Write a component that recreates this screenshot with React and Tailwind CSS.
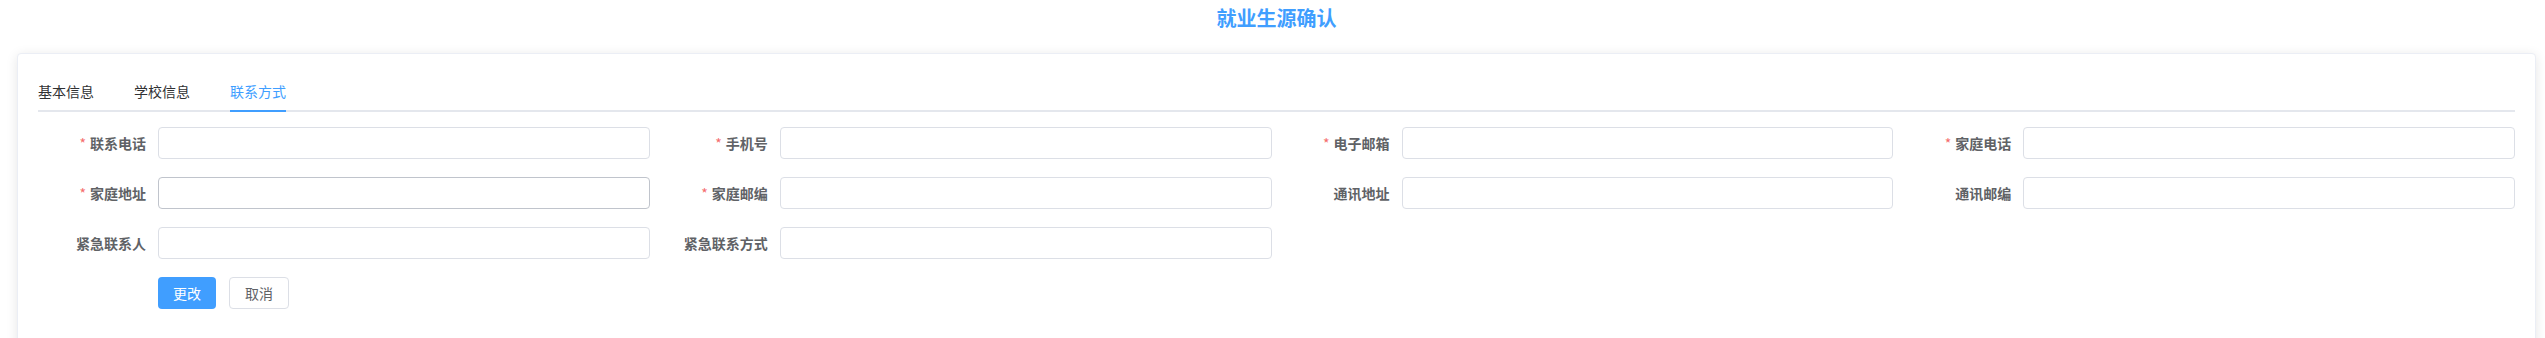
import React, { useState } from 'react';

const tabs = ['基本信息', '学校信息', '联系方式'];

const fields = [
    { label: '联系电话', required: true },
    { label: '手机号', required: true },
    { label: '电子邮箱', required: true },
    { label: '家庭电话', required: true },
    { label: '家庭地址', required: true, hover: true },
    { label: '家庭邮编', required: true },
    { label: '通讯地址' },
    { label: '通讯邮编' },
    { label: '紧急联系人' },
    { label: '紧急联系方式' },
];

const FormItem = ({ label, required, hover }) => (
    <div className="flex items-center h-8">
        <label className="w-[120px] shrink-0 pr-3 text-right text-sm font-bold text-[#606266] leading-8">
            {required && <span className="text-[#f56c6c] mr-1 font-normal">*</span>}
            {label}
        </label>
        <input
            type="text"
            className={`flex-1 min-w-0 h-8 rounded border bg-white px-[15px] text-sm text-[#606266] outline-none ${hover ? 'border-[#c0c4cc]' : 'border-[#dcdfe6]'}`}
        />
    </div>
);

const App = () => {
    const [activeTab, setActiveTab] = useState(2);

    return (
        <div className="min-h-screen bg-white font-['Noto_Sans_CJK_SC','Noto_Sans',sans-serif]">
            <div className="pl-[17px] pr-[9px]">
                <div className="h-[53px] text-center text-[20px] font-bold leading-[35px] text-[#409eff]">
                    就业生源确认
                </div>
                <div className="rounded border border-[#ebeef5] bg-white px-5 pt-[18px] pb-10 shadow-[0_2px_12px_0_rgba(0,0,0,0.1)]">
                    <div className="flex border-b-2 border-[#e4e7ed]">
                        {tabs.map((tab, index) => (
                            <div key={index} className="px-5 first:pl-0 last:pr-0 -mb-[2px] cursor-pointer" onClick={() => setActiveTab(index)}>
                                <div
                                    className={`h-10 border-b-2 text-sm leading-[38px] ${activeTab === index ? 'border-[#409eff] text-[#409eff]' : 'border-transparent text-[#303133]'}`}
                                >
                                    {tab}
                                </div>
                            </div>
                        ))}
                    </div>
                    <div className="mt-[15px] grid grid-cols-4 gap-x-[10px] gap-y-[18px]">
                        {fields.map((field, index) => (
                            <FormItem key={index} {...field} />
                        ))}
                    </div>
                    <div className="mt-[18px] flex gap-[13px] pl-[120px]">
                        <button className="h-8 rounded bg-[#409eff] px-[15px] text-sm text-white">更改</button>
                        <button className="h-8 rounded border border-[#dcdfe6] bg-white px-[15px] text-sm text-[#606266]">取消</button>
                    </div>
                </div>
            </div>
        </div>
    );
};

export default App;
